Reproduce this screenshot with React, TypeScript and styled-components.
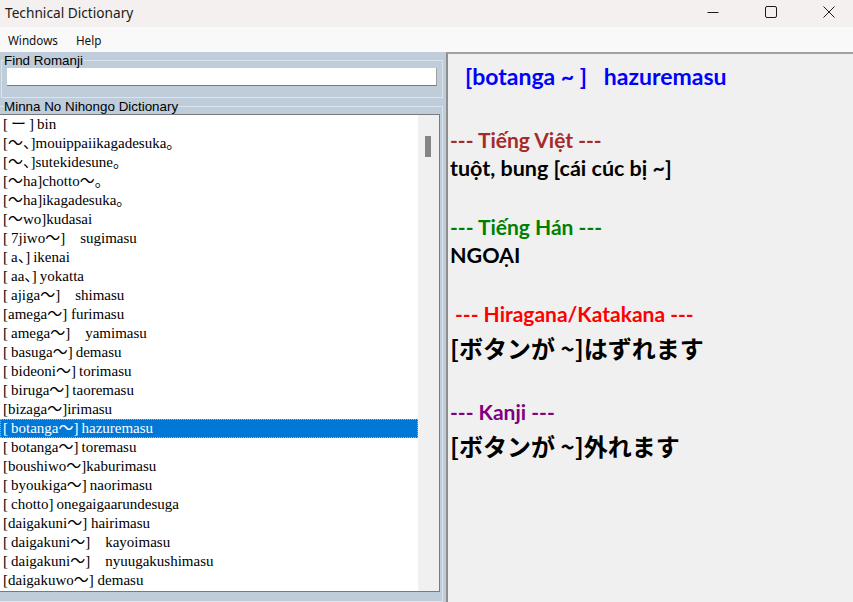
import styled, { createGlobalStyle } from "styled-components";

const GlobalStyle = createGlobalStyle`
  html, body {
    margin: 0;
    padding: 0;
    overflow: hidden;
  }
  * {
    box-sizing: border-box;
  }
`;

const Window = styled.div`
  width: 853px;
  height: 602px;
  display: flex;
  flex-direction: column;
  overflow: hidden;
  background: #f0f0f0;
`;

const TitleBar = styled.div`
  height: 27px;
  display: flex;
  align-items: center;
  background: #f3f0ef;
  padding-left: 5px;
`;
const Title = styled.span`
  flex: 1;
  font-family: "Noto Sans", sans-serif;
  font-size: 13.7px;
  color: #1b1b1b;
  margin-top: -3px;
`;
const Controls = styled.div`
  display: flex;
  height: 100%;
  margin-right: -5px;
`;
const ControlButton = styled.div`
  width: 58px;
  display: flex;
  align-items: center;
  justify-content: center;
  padding-bottom: 3px;
`;

const MenuBar = styled.div`
  height: 25px;
  background: #f9f9f9;
  display: flex;
  align-items: center;
  gap: 18px;
  padding-left: 8px;
  font-family: "Noto Sans", sans-serif;
  font-size: 11.7px;
  color: #111;
`;

const Body = styled.div`
  flex: 1;
  display: flex;
  min-height: 0;
`;

const LeftPane = styled.div`
  width: 446px;
  display: flex;
  flex-direction: column;
  background: #bfcddb;
`;

const Group = styled.fieldset<{ $open?: boolean }>`
  margin: 0 3px 0 ${(p) => (p.$open ? "0" : "1px")};
  padding: ${(p) => (p.$open ? "0 2px 0 0" : "0 5px 11px 5px")};
  border: 1px solid #dce3ea;
  border-left: ${(p) => (p.$open ? "none" : "1px solid #dce3ea")};
  min-width: 0;
  flex: ${(p) => (p.$open ? "1" : "none")};
`;
const Legend = styled.legend<{ $open?: boolean }>`
  padding: 2px 0 0;
  margin-left: ${(p) => (p.$open ? "4px" : "-3px")};
  font-family: "Liberation Sans", Arial, sans-serif;
  font-size: 13.4px;
  line-height: 14px;
  color: #000;
`;

const TextBox = styled.div`
  height: 18px;
  background: #fff;
  border-right: 1px solid #a0a0a0;
  border-bottom: 1px solid #7a7a7a;
`;

const ListBox = styled.div`
  display: flex;
  height: 478px;
  background: #fff;
  border: 1px solid #7a7a7a;
  border-left: none;
`;
const Rows = styled.div`
  flex: 1;
  overflow: hidden;
`;
const Row = styled.div<{ $selected?: boolean }>`
  height: 19px;
  line-height: 19px;
  padding-left: 3px;
  white-space: pre;
  font-family: "Liberation Serif", "Noto Sans CJK JP", serif;
  font-size: 15px;
  color: ${(p) => (p.$selected ? "#fff" : "#000")};
  background: ${(p) => (p.$selected ? "#0078d7" : "transparent")};
  outline: ${(p) => (p.$selected ? "1px dotted #e9a657" : "none")};
  outline-offset: -1px;
`;
const ScrollBar = styled.div`
  width: 21px;
  background: #f0f0f0;
`;
const Thumb = styled.div`
  width: 6px;
  height: 21px;
  margin: 21px 0 0 7px;
  background: #858585;
`;

const RightPane = styled.div`
  flex: 1;
  background: #f0f0f0;
  border-left: 2px solid #8e8e8e;
  border-top: 2px solid #a0a0a0;
  padding: 8px 0 0 2px;
  font-family: Lato, "Noto Sans", "Noto Sans CJK JP", sans-serif;
  font-weight: 700;
`;
const Headline = styled.div`
  color: #0000ff;
  font-size: 23px;
  line-height: 29px;
  padding-left: 15px;
  white-space: pre;
  margin-bottom: 34px;
`;
const Section = styled.div`
  margin-bottom: 29px;
`;
const Heading = styled.div<{ $color: string; $indent?: number }>`
  color: ${(p) => p.$color};
  font-size: 21px;
  line-height: 29px;
  padding-left: ${(p) => p.$indent ?? 0}px;
`;
const Value = styled.div<{ $jp?: boolean }>`
  color: #000;
  font-family: ${(p) => (p.$jp ? '"Noto Sans CJK JP", sans-serif' : "inherit")};
  font-size: ${(p) => (p.$jp ? "24px" : "21.5px")};
  line-height: ${(p) => (p.$jp ? "40px" : "29px")};
`;

const t = "\u2009";

const rows = [
  `[${t}ー${t}]${t}bin`,
  "[～、]mouippaiikagadesuka。",
  "[～、]sutekidesune。",
  "[～ha]chotto～。",
  "[～ha]ikagadesuka。",
  "[～wo]kudasai",
  `[${t}7jiwo～]　sugimasu`,
  `[${t}a、]${t}ikenai`,
  `[${t}aa、]${t}yokatta`,
  `[${t}ajiga～]　shimasu`,
  "[amega～] furimasu",
  `[${t}amega～]　yamimasu`,
  `[${t}basuga～]${t}demasu`,
  `[${t}bideoni～]${t}torimasu`,
  `[${t}biruga～]${t}taoremasu`,
  "[bizaga～]irimasu",
  `[${t}botanga～]${t}hazuremasu`,
  `[${t}botanga～]${t}toremasu`,
  "[boushiwo～]kaburimasu",
  `[${t}byoukiga～]${t}naorimasu`,
  `[${t}chotto]${t}onegaigaarundesuga`,
  "[daigakuni～] hairimasu",
  `[${t}daigakuni～]　kayoimasu`,
  `[${t}daigakuni～]　nyuugakushimasu`,
  "[daigakuwo～] demasu",
];

const sections = [
  { title: "--- Tiếng Việt ---", color: "#a52a2a", value: "tuột, bung [cái cúc bị ~]" },
  { title: "--- Tiếng Hán ---", color: "#008000", value: "NGOẠI" },
  { title: "--- Hiragana/Katakana ---", color: "#ff0000", value: "[ボタンが ~]はずれます", jp: true, indent: 5 },
  { title: "--- Kanji ---", color: "#800080", value: "[ボタンが ~]外れます", jp: true },
];

const App = () => {
  return (
    <Window>
      <GlobalStyle />
      <TitleBar>
        <Title>Technical Dictionary</Title>
        <Controls>
          <ControlButton>
            <svg width="12" height="12" viewBox="0 0 12 12">
              <path d="M0.5 6.5h11" stroke="#1b1b1b" strokeWidth="1" />
            </svg>
          </ControlButton>
          <ControlButton>
            <svg width="12" height="12" viewBox="0 0 12 12">
              <rect x="0.5" y="0.5" width="11" height="11" rx="1.5" fill="none" stroke="#1b1b1b" strokeWidth="1" />
            </svg>
          </ControlButton>
          <ControlButton>
            <svg width="12" height="12" viewBox="0 0 12 12">
              <path d="M0.5 0.5l11 11M11.5 0.5l-11 11" stroke="#1b1b1b" strokeWidth="1" />
            </svg>
          </ControlButton>
        </Controls>
      </TitleBar>
      <MenuBar>
        <span>Windows</span>
        <span>Help</span>
      </MenuBar>
      <Body>
        <LeftPane>
          <Group>
            <Legend>Find Romanji</Legend>
            <TextBox />
          </Group>
          <Group $open>
            <Legend $open>Minna No Nihongo Dictionary</Legend>
            <ListBox>
              <Rows>
                {rows.map((r, i) => (
                  <Row key={i} $selected={i === 16}>
                    {r}
                  </Row>
                ))}
              </Rows>
              <ScrollBar>
                <Thumb />
              </ScrollBar>
            </ListBox>
          </Group>
        </LeftPane>
        <RightPane>
          <Headline>{"[botanga ~ ]   hazuremasu"}</Headline>
          {sections.map((s) => (
            <Section key={s.title}>
              <Heading $color={s.color} $indent={s.indent}>
                {s.title}
              </Heading>
              <Value $jp={s.jp}>{s.value}</Value>
            </Section>
          ))}
        </RightPane>
      </Body>
    </Window>
  );
};

export default App;
